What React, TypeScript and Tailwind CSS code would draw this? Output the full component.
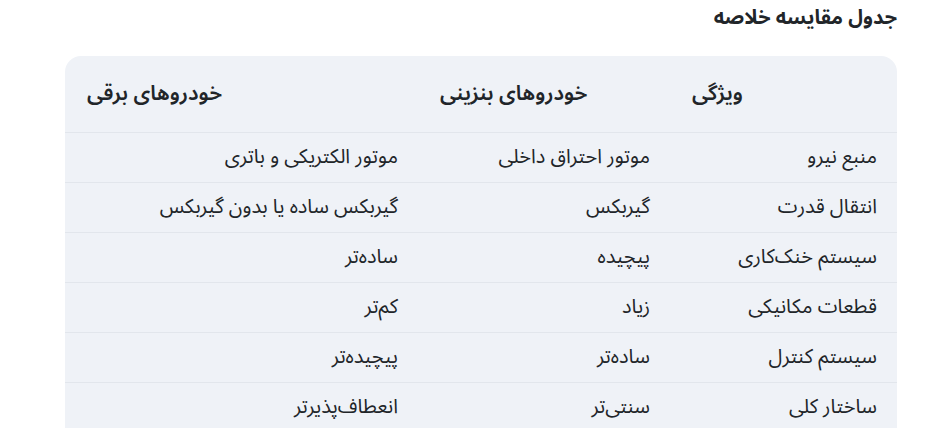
import React from "react";

const rows: [string, string, string][] = [
  ["منبع نیرو", "موتور احتراق داخلی", "موتور الکتریکی و باتری"],
  ["انتقال قدرت", "گیربکس", "گیربکس ساده یا بدون گیربکس"],
  ["سیستم خنک‌کاری", "پیچیده", "ساده‌تر"],
  ["قطعات مکانیکی", "زیاد", "کم‌تر"],
  ["سیستم کنترل", "ساده‌تر", "پیچیده‌تر"],
  ["ساختار کلی", "سنتی‌تر", "انعطاف‌پذیرتر"],
];

export default function App() {
  return (
    <div
      dir="rtl"
      className="min-h-screen bg-white text-[#212529]"
      style={{ fontFamily: '"Noto Sans Arabic", sans-serif' }}
    >
      <div className="mr-[50px] ml-[50px]">
        <h3 className="pt-[2px] pr-0 text-[20px] font-bold leading-[32px]">جدول مقایسه خلاصه</h3>
        <div className="ml-[15px] mt-[22px] overflow-hidden rounded-t-[16px] bg-[#eff2f7]">
          <table className="w-full border-collapse">
            <colgroup>
              <col className="w-[227px]" />
              <col className="w-[252px]" />
              <col />
            </colgroup>
            <thead>
              <tr className="h-[76px] border-b border-[#e2e6ec]">
                <th className="px-[22px] text-left text-[21px] font-semibold">ویژگی</th>
                <th className="px-[22px] text-left text-[21px] font-semibold">خودروهای بنزینی</th>
                <th className="px-[22px] text-left text-[21px] font-semibold">خودروهای برقی</th>
              </tr>
            </thead>
            <tbody>
              {rows.map((r, i) => (
                <tr key={i} className="h-[50px] border-b border-[#e2e6ec] text-[20px]">
                  <td className="px-[20px] text-right">{r[0]}</td>
                  <td className="px-[20px] text-right">{r[1]}</td>
                  <td className="px-[20px] text-right">{r[2]}</td>
                </tr>
              ))}
            </tbody>
          </table>
        </div>
      </div>
    </div>
  );
}
